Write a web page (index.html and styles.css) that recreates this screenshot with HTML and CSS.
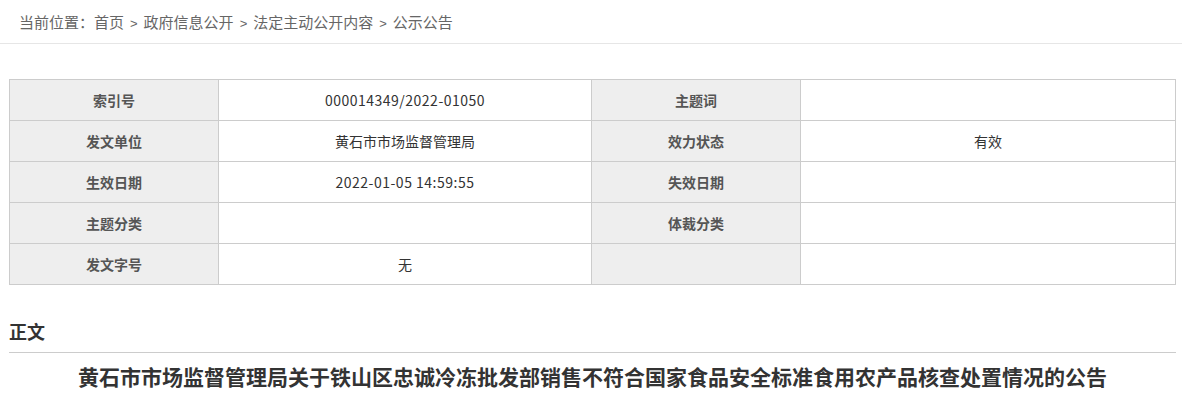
FILE: index.html
```html
<!DOCTYPE html>
<html lang="zh-CN">
<head>
<meta charset="utf-8">
<title>公示公告</title>
<link rel="stylesheet" href="styles.css">
</head>
<body>
<div class="crumb">当前位置：首页<span class="sep">&gt;</span>政府信息公开<span class="sep">&gt;</span>法定主动公开内容<span class="sep">&gt;</span>公示公告</div>
<div class="main">
  <table class="meta">
    <colgroup><col class="c1"><col class="c2"><col class="c3"><col class="c4"></colgroup>
    <tr><th>索引号</th><td class="num">000014349/2022-01050</td><th>主题词</th><td></td></tr>
    <tr><th>发文单位</th><td>黄石市市场监督管理局</td><th>效力状态</th><td>有效</td></tr>
    <tr><th>生效日期</th><td class="num">2022-01-05 14:59:55</td><th>失效日期</th><td></td></tr>
    <tr><th>主题分类</th><td></td><th>体裁分类</th><td></td></tr>
    <tr><th>发文字号</th><td>无</td><th></th><td></td></tr>
  </table>
  <div class="section">正文</div>
  <h1 class="title">黄石市市场监督管理局关于铁山区忠诚冷冻批发部销售不符合国家食品安全标准食用农产品核查处置情况的公告</h1>
</div>
</body>
</html>
```
FILE: styles.css
```css
html, body {
  margin: 0;
  padding: 0;
  background: #fff;
  font-family: "Noto Sans CJK SC", "Microsoft YaHei", sans-serif;
  color: #333;
}
.crumb {
  height: 43px;
  line-height: 43px;
  padding-left: 19px;
  font-size: 15px;
  color: #666;
  border-bottom: 1px solid #e6e6e6;
}
.crumb .sep {
  display: inline-block;
  font-family: "Liberation Sans", sans-serif;
  font-size: 13px;
  margin: 0 6px;
}
.main {
  margin: 35px 0 0 9px;
  width: 1167px;
}
.meta {
  width: 1167px;
  border-collapse: collapse;
  table-layout: fixed;
  font-size: 14px;
}
.meta .c1, .meta .c3 { width: 209px; }
.meta .c2 { width: 373px; }
.meta th, .meta td {
  border: 1px solid #cccccc;
  height: 40px;
  padding: 0;
  text-align: center;
  vertical-align: middle;
}
.meta th {
  background: #eeeeee;
  color: #555;
  font-weight: bold;
}
.meta td {
  color: #333;
}
.meta td.num {
  letter-spacing: 0.5px;
}
.section {
  margin-top: 34px;
  font-size: 18px;
  line-height: 24px;
  font-weight: bold;
  color: #333;
  padding-bottom: 9px;
  border-bottom: 1px solid #cccccc;
}
.title {
  margin: 8px 0 0;
  font-size: 21px;
  line-height: 30px;
  font-weight: bold;
  color: #333;
  text-align: center;
}
```
